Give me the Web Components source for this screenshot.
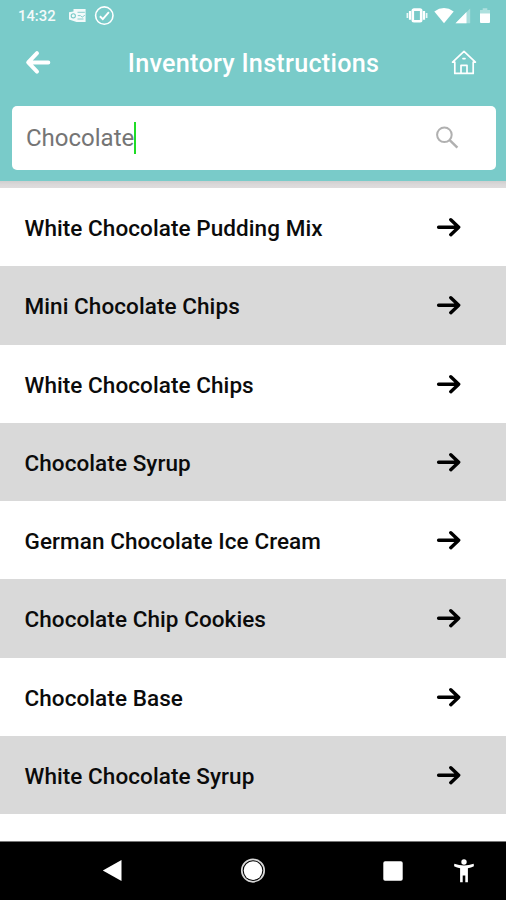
<!DOCTYPE html>
<html lang="en">
<head>
<meta charset="utf-8">
<meta name="viewport" content="width=device-width, initial-scale=1">
<title>Inventory Instructions</title>
<style>
  html, body { margin: 0; height: 100%; overflow: hidden; }
  body { font-family: Roboto, "Liberation Sans", sans-serif; background: #fff; }
</style>
</head>
<body>
<inventory-app>
  <status-bar slot="top" time="14:32"></status-bar>
  <title-bar slot="top">Inventory Instructions</title-bar>
  <search-field slot="top" value="Chocolate"></search-field>
  <item-row>White Chocolate Pudding Mix</item-row>
  <item-row>Mini Chocolate Chips</item-row>
  <item-row>White Chocolate Chips</item-row>
  <item-row>Chocolate Syrup</item-row>
  <item-row>German Chocolate Ice Cream</item-row>
  <item-row>Chocolate Chip Cookies</item-row>
  <item-row>Chocolate Base</item-row>
  <item-row>White Chocolate Syrup</item-row>
  <nav-bar slot="bottom"></nav-bar>
</inventory-app>

<script>
class InventoryApp extends HTMLElement {
  constructor() {
    super();
    this.attachShadow({ mode: 'open' });
    this.shadowRoot.innerHTML = `
      <style>
        :host { display: flex; flex-direction: column; height: 900px; width: 506px; overflow: hidden; }
        header { flex: none; height: 181px; background: #79cbc9; }
        .shade { flex: none; height: 7px; background: linear-gradient(#cfcfcf, #dad8d9 50%, #dfdddd); }
        main { flex: 1; min-height: 0; overflow: hidden; background: #fff; }
        ::slotted(item-row:nth-of-type(even)) { background: #d9d9d9; }
      </style>
      <header><slot name="top"></slot></header>
      <div class="shade"></div>
      <main><slot></slot></main>
      <slot name="bottom"></slot>
    `;
  }
}
customElements.define('inventory-app', InventoryApp);

class StatusBar extends HTMLElement {
  constructor() {
    super();
    this.attachShadow({ mode: 'open' });
    const time = this.getAttribute('time') || '';
    this.shadowRoot.innerHTML = `
      <style>
        :host { display: flex; align-items: center; height: 31px; padding: 0 15px 0 18px; color: #fff; box-sizing: border-box; }
        .time { font-size: 14.8px; line-height: 30px; font-weight: 500; width: 50px; padding-top: 1px; opacity: .92; }
        svg { display: block; flex: none; }
        .check { margin-left: 7px; }
        .right { display: flex; align-items: center; margin-left: auto; }
      </style>
      <span class="time">${time}</span>
      <svg width="19" height="16" viewBox="0 0 19 16">
        <path d="M5.5 1H17.6v13H8.5L1 11.5V4.2L5.5 3.6z" fill="#fff" opacity=".9"/>
        <circle cx="5.3" cy="7.8" r="2.1" fill="none" stroke="#79cbc9" stroke-width="1.1"/>
        <path d="M9.5 4.3h7.3M9.8 7.6h2.7l1.6 1.6 2.7-1.9M9.5 11h6" fill="none" stroke="#79cbc9" stroke-width=".9"/>
      </svg>
      <svg class="check" width="20" height="20" viewBox="0 0 20 20" fill="none" stroke="#fff">
        <circle cx="10.3" cy="9.6" r="8.7" stroke-width="1.6"/>
        <path d="M5.9 10.3l2.9 2.8 6.1-7" stroke-width="1.9"/>
      </svg>
      <span class="right">
        <svg width="22" height="18" viewBox="0 0 22 18" fill="none" stroke="#fff">
          <rect x="6.8" y="2.6" width="8.4" height="11.6" rx="1.2" stroke-width="2.6"/>
          <path d="M4 4v8.8M18 4v8.8" stroke-width="2.2"/>
          <path d="M1.4 6.1v4.8M20.6 6.1v4.8" stroke-width="1.7" opacity=".85"/>
        </svg>
        <svg width="20" height="16" viewBox="0 0 20 16" style="margin-left:6px">
          <path d="M.3 3.4Q10-3.3 19.7 3.4L10 15.2z" fill="#fff"/>
        </svg>
        <svg width="16" height="16" viewBox="0 0 16 16" style="margin-left:1px">
          <path d="M15.2.5v14.8H.5z" fill="#fff" opacity=".35"/>
          <path d="M11.5 4.1v11.2H.5z" fill="#fff"/>
        </svg>
        <svg width="12" height="18" viewBox="0 0 12 18" style="margin-left:8.5px">
          <path d="M1 7V3h2.7V1.2h4.6V3H11v4z" fill="#fff" opacity=".4"/>
          <path d="M1 6.5h10V15q0 1-1 1H2q-1 0-1-1z" fill="#fff"/>
        </svg>
      </span>
    `;
  }
}
customElements.define('status-bar', StatusBar);

class TitleBar extends HTMLElement {
  constructor() {
    super();
    this.attachShadow({ mode: 'open' });
    this.shadowRoot.innerHTML = `
      <style>
        :host { display: grid; grid-template-columns: 26px 1fr 26px; align-items: center; height: 64px; padding: 0 29px 0 25px; box-sizing: border-box; color: #fff; }
        .title { text-align: center; font-size: 25.2px; letter-spacing: .26px; font-weight: 500; line-height: 30px; white-space: nowrap; padding: 2px 0 0 5px; }
        svg { display: block; }
      </style>
      <svg width="26" height="26" viewBox="0 0 26 26" fill="none" stroke="#fff" stroke-width="4" stroke-linecap="round" stroke-linejoin="round">
        <path d="M23.3 12.4H3.8M12 3.1L3.2 12.4l8.8 9.2"/>
      </svg>
      <div class="title"><slot></slot></div>
      <svg width="26" height="26" viewBox="0 0 26 26" fill="none" stroke="#fff" stroke-width="1.7" stroke-linejoin="round" stroke-linecap="round">
        <path d="M1.6 12.2L13 1.4l11.4 10.8h-2.2v11.2H3.8V12.2zM10 23.3v-8h6v8M12 8.6h2"/>
      </svg>
    `;
  }
}
customElements.define('title-bar', TitleBar);

class SearchField extends HTMLElement {
  constructor() {
    super();
    this.attachShadow({ mode: 'open' });
    const value = this.getAttribute('value') || '';
    this.shadowRoot.innerHTML = `
      <style>
        :host { display: block; padding: 10.5px 10.5px 0 11.5px; }
        .box { display: flex; align-items: center; height: 64.5px; background: #fff; border-radius: 5px; padding: 0 37px 0 14.5px; box-sizing: border-box; }
        .value { font-size: 24px; line-height: 30px; color: #757575; white-space: nowrap; padding-top: 1px; }
        .caret { width: 2px; height: 32px; background: #1fdc26; }
        svg { display: block; margin-left: auto; }
      </style>
      <div class="box">
        <span class="value">${value}</span><span class="caret"></span>
        <svg width="24" height="24" viewBox="0 0 24 24" fill="none" stroke="#b0b0b0">
          <circle cx="9.4" cy="8.8" r="7.3" stroke-width="2"/>
          <path d="M14.7 14.2l7.7 7.5" stroke-width="2.5"/>
        </svg>
      </div>
    `;
  }
}
customElements.define('search-field', SearchField);

class ItemRow extends HTMLElement {
  constructor() {
    super();
    this.attachShadow({ mode: 'open' });
    this.shadowRoot.innerHTML = `
      <style>
        :host { display: flex; align-items: center; justify-content: space-between; height: 78.25px; padding: 0 44px 0 24.5px; box-sizing: border-box; color: #0b0b0b; }
        .label { font-size: 22.5px; letter-spacing: .07px; line-height: 28px; font-weight: 500; white-space: nowrap; padding-top: 2px; }
        svg { display: block; }
      </style>
      <span class="label"><slot></slot></span>
      <svg width="26" height="20" viewBox="0 0 26 20" fill="none" stroke="#000" stroke-width="3.4" stroke-linecap="round" stroke-linejoin="round">
        <path d="M2.6 10.2h19.6M14.8 2.7l7.9 7.5-7.9 7.5"/>
      </svg>
    `;
  }
}
customElements.define('item-row', ItemRow);

class NavBar extends HTMLElement {
  constructor() {
    super();
    this.attachShadow({ mode: 'open' });
    this.shadowRoot.innerHTML = `
      <style>
        :host { display: flex; align-items: center; flex: none; height: 59px; padding-left: 102px; background: #000; border-top: 1px solid #777; box-sizing: border-box; }
        svg { display: block; flex: none; }
      </style>
      <svg width="20" height="22" viewBox="0 0 20 22"><path d="M.8 10.5L19.5 0v21z" fill="#fff"/></svg>
      <svg width="26" height="26" viewBox="0 0 26 26" style="margin-left:118px">
        <circle cx="13" cy="12.6" r="11.2" fill="none" stroke="#d8d8d8" stroke-width="1.7"/>
        <circle cx="13" cy="12.6" r="9.3" fill="#fff"/>
      </svg>
      <svg width="20" height="20" viewBox="0 0 20 20" style="margin-left:117px"><rect x=".3" y=".3" width="19.4" height="19.4" rx="1.8" fill="#fff"/></svg>
      <svg width="20" height="24" viewBox="0 0 20 24" style="margin-left:51px" fill="#fff">
        <circle cx="10" cy="3" r="2.7"/>
        <path d="M.3 4.8Q10 8.4 19.7 4.8l.2 2.5Q17 8.6 13.9 9.2V23.2h-2.6v-6.7H8.7v6.7H6.1V9.2Q3 8.6.1 7.3z"/>
      </svg>
    `;
  }
}
customElements.define('nav-bar', NavBar);
</script>
</body>
</html>
